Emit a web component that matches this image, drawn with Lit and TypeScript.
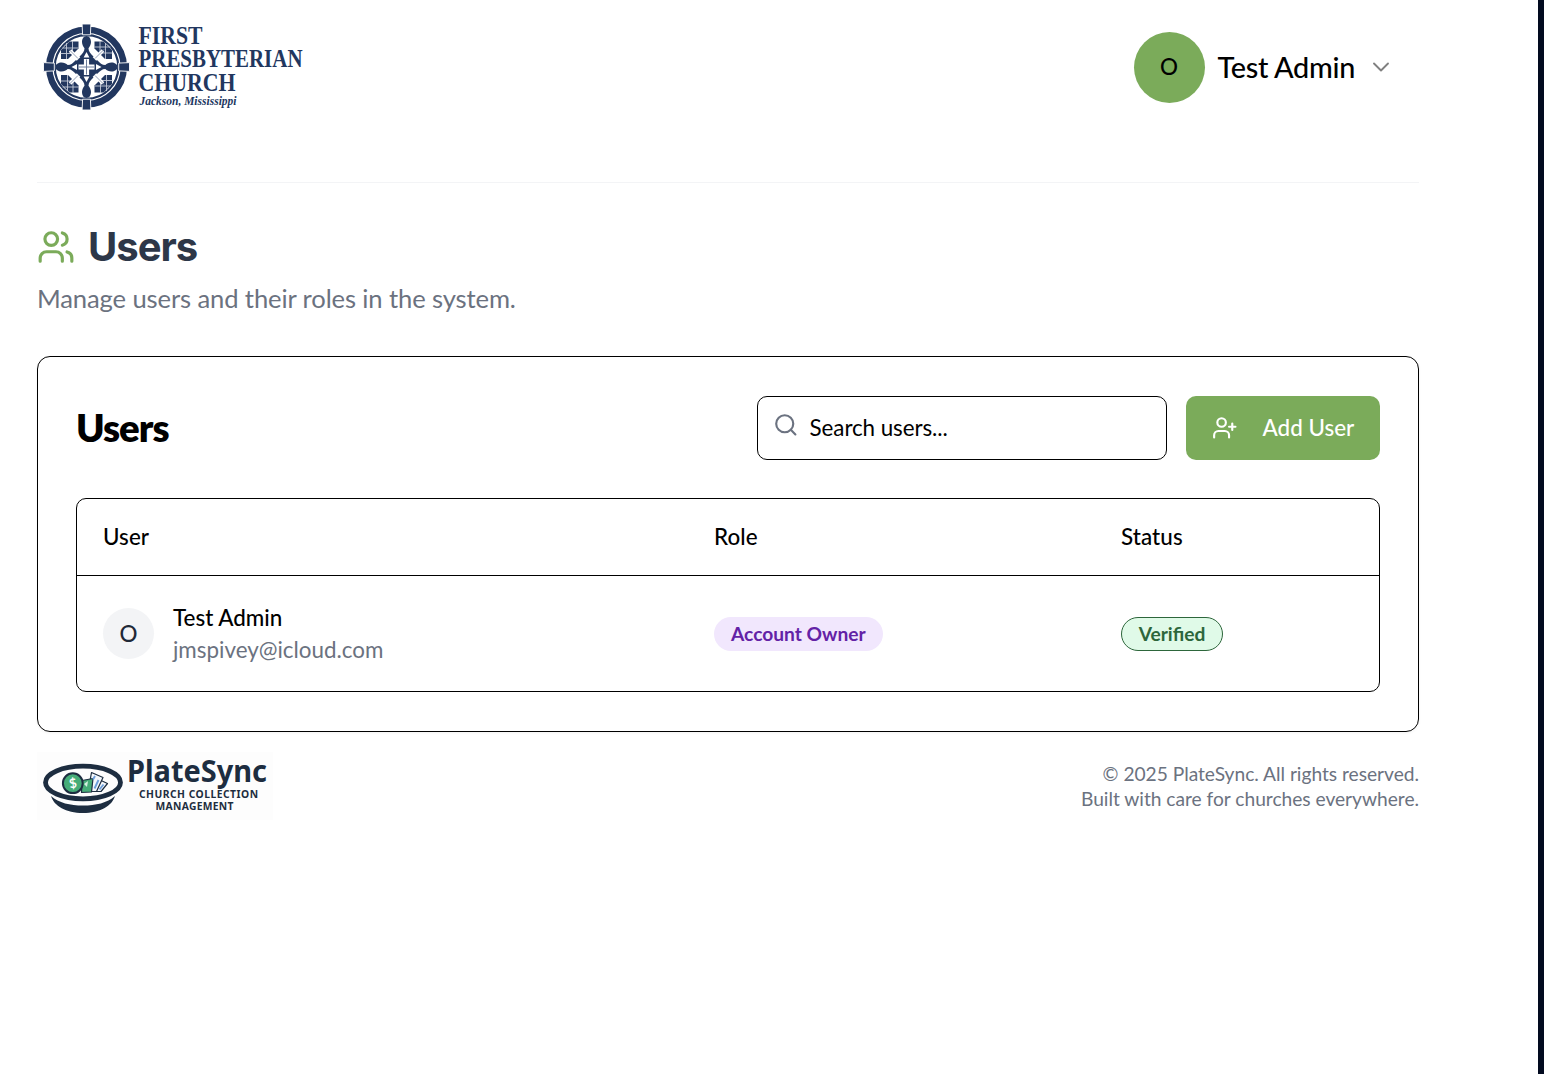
import { LitElement, html, css, svg } from "lit";
import { customElement } from "lit/decorators.js";

@customElement("church-logo")
class ChurchLogo extends LitElement {
  static styles = css`
    :host { display: block; width: 300px; height: 94px; }
    .logo { display: block; overflow: visible; }
    .name { font-family: "Liberation Serif", serif; font-weight: 700; font-size: 25px; }
    .place { font-family: "Liberation Serif", serif; font-weight: 700; font-style: italic; font-size: 13px; }
  `;
  render() {
    const arm = svg`
      <path d="M-4.400-43h8.800l-.5 10.800h-7.800z" fill="#22375f" stroke="#fff" stroke-width=".9"/>
      <path d="M0-31c2.900 0 4.500 3 4.500 6 0 2.500-1.300 4.800-2.500 6.200 0 3.300 2 5.300 5 8.300l-3 3-4-5-4 5-3-3c3-3 5-5 5-8.300-1.200-1.400-2.500-3.700-2.500-6.200C-4.500-28-2.900-31 0-31z" fill="#22375f"/>
      <path d="M0-15l2.900 5.500h-5.800z" fill="#fff"/>`;
    const pane = svg`
      <path d="M8-25.500h9l8.500 8.500v9h-7L8-18.500z" fill="#22375f"/>
      <path d="M13.500-26v12M19-24v16M8-20h16M12-14h14" stroke="#c4cbd8" stroke-width=".9"/>
      <path d="M8.500-8.500l8-8" stroke="#fff" stroke-width="3.600"/>
      <path d="M8.500-8.500l10-10" stroke="#7585a2" stroke-width=".8"/>`;
    return html`<svg class="logo" width="300" height="94" viewBox="0 0 300 94" fill="none">
      <g transform="translate(49.500 47)">
        <circle r="37.300" stroke="#22375f" stroke-width="6.400"/>
        <circle r="31.800" stroke="#22375f" stroke-width="2.200"/>
        ${[0, 90, 180, 270].map((a) => svg`<g transform="rotate(${a})">${pane}</g>`)}
        <path d="M0-16L16 0 0 16-16 0z" fill="#22375f"/>
        ${[0, 90, 180, 270].map((a) => svg`<g transform="rotate(${a})">${arm}</g>`)}
        <path d="M-2.600-8h5.200v5.400h5.400v5.200h-5.400v5.400h-5.200v-5.400h-5.400v-5.200h5.400z" fill="#fff"/>
        <path d="M0-7.500v15M-7.500 0h15" stroke="#6f7f9d" stroke-width="1"/>
      </g>
      <g fill="#22375f">
        <text class="name" x="101.500" y="23.500" textLength="64" lengthAdjust="spacingAndGlyphs">FIRST</text>
        <text class="name" x="101.500" y="47" textLength="164" lengthAdjust="spacingAndGlyphs">PRESBYTERIAN</text>
        <text class="name" x="101.500" y="70.500" textLength="97" lengthAdjust="spacingAndGlyphs">CHURCH</text>
        <text class="place" x="102.500" y="85" textLength="97" lengthAdjust="spacingAndGlyphs">Jackson, Mississippi</text>
      </g>
    </svg>`;
  }
}

@customElement("platesync-logo")
class PlateSyncLogo extends LitElement {
  static styles = css`
    :host { display: block; width: 236px; height: 68px; background: #fdfdfd; }
    .logo { display: block; }
    .brand { font-family: "Noto Sans", sans-serif; font-weight: 700; font-size: 30px; }
    .tag { font-family: "Noto Sans", sans-serif; font-weight: 700; font-size: 10.300px; }
    .dollar { font-family: Lato, sans-serif; font-weight: 700; font-size: 13px; }
  `;
  render() {
    return html`<svg class="logo" width="236" height="68" viewBox="0 0 236 68" fill="none">
      <path d="M14 44c8 7 19 9.500 32 9.500S70 51 78 44c-3 10-15 17-32 17s-29-7-32-17z" fill="#1d2d40"/>
      <ellipse cx="46" cy="30.500" rx="37.500" ry="16.300" fill="#fdfdfd" stroke="#1d2d40" stroke-width="4.800"/>
      <g stroke="#1d2d40" stroke-width="1.200" stroke-linejoin="round">
        <path d="M63 28l7.500 3.500-6.500 8h-5z" fill="#f4f8fc"/>
        <path d="M54.500 20.500l11.500 5-6.500 14h-8.500z" fill="#f4f8fc"/>
        <path d="M45 28.500l11-2-1.500 13.500-10 .5z" fill="#46ad78"/>
        <circle cx="35.800" cy="31.200" r="9.900" fill="#46ad78" stroke-width="2"/>
      </g>
      <path d="M58 24l-2 3.500M61.500 28l-4 8.500M66.500 32.500l-4 5" stroke="#6d9fdb" stroke-width="1.900"/>
      <path d="M47 32l4-3-1 6z" fill="#d5f0e1"/>
      <text class="dollar" x="32.200" y="35.800" fill="#fff" transform="rotate(-10 36 31)">$</text>
      <g fill="#1d2d40">
        <text class="brand" x="90" y="29.600" textLength="140" lengthAdjust="spacingAndGlyphs">PlateSync</text>
        <text class="tag" x="102" y="46" textLength="119">CHURCH COLLECTION</text>
        <text class="tag" x="118.500" y="58" textLength="78">MANAGEMENT</text>
      </g>
    </svg>`;
  }
}

@customElement("app-root")
class AppRoot extends LitElement {
  static styles = css`
    :host { display: block; font-family: Lato, "Liberation Sans", sans-serif; color: #000; }
    * { box-sizing: border-box; }
    .page { height: 1074px; background: #fff; border-right: 6px solid #020a1f; padding: 0 119px 0 37px; overflow: hidden; }
    .top { height: 183px; border-bottom: 1px solid #f3f4f6; padding-top: 20px; display: flex; justify-content: space-between; align-items: flex-start; }
    .account { display: flex; align-items: center; margin: 12px 26px 0 0; }
    .avatar { width: 71px; height: 71px; border-radius: 50%; background: #7bab5a; display: flex; align-items: center; justify-content: center; font-size: 22.400px; font-weight: 500; padding-bottom: 3px; }
    .account-name { font-size: 28.800px; font-weight: 500; letter-spacing: -.3px; margin: 0 14px 2px 13px; line-height: 40px; }
    .chevron { margin-bottom: 2px; }
    svg { display: block; flex: none; }
    .heading { display: flex; align-items: center; margin-top: 39px; height: 50px; gap: 13px; }
    .heading-text { margin: 0; font-family: Inter, sans-serif; font-weight: 700; font-size: 40px; line-height: 50px; letter-spacing: -1px; color: #2d3748; }
    .lead { margin: 5px 0 0; font-size: 25.600px; line-height: 42px; letter-spacing: -.12px; color: #6b7280; }
    .card { margin-top: 37px; height: 376px; border: 1px solid #000; border-radius: 13px; padding: 39px 38px 0; box-shadow: 0 1px 3px rgba(0,0,0,.05); }
    .toolbar { display: flex; align-items: center; height: 64px; }
    .card-title { margin: 0 auto 0 0; font-size: 38.400px; font-weight: 800; letter-spacing: -1px; padding-bottom: 2px; }
    .search { width: 410px; height: 64px; border: 1px solid #000; border-radius: 10px; display: flex; align-items: center; padding-left: 15px; gap: 11px; font-size: 22.400px; margin-right: 19px; }
    .search-text { padding-bottom: 2px; letter-spacing: -.08px; }
    .search-icon { margin-top: -7px; }
    .add { width: 194px; height: 64px; border: 0; border-radius: 10px; background: #7bab5a; color: #fff; font: 500 22.400px Lato, sans-serif; display: flex; align-items: center; padding: 0 0 1px 26px; gap: 25px; }
    .add-text { padding-bottom: 1px; }
    .table { margin-top: 38px; height: 194px; border: 1px solid #000; border-radius: 10px; }
    .row { display: grid; grid-template-columns: 611px 407px 1fr; align-items: center; padding-left: 26px; height: 115px; font-size: 22.400px; }
    .head { height: 77px; border-bottom: 1px solid #000; font-weight: 500; padding-bottom: 2px; letter-spacing: .1px; }
    .person { display: flex; align-items: center; gap: 19px; }
    .initial { width: 51px; height: 51px; border-radius: 50%; background: #f3f4f6; color: #1f2937; display: flex; align-items: center; justify-content: center; font-weight: 500; }
    .person-name { font-weight: 500; line-height: 32px; }
    .mail { color: #6b7280; line-height: 32px; }
    .badge { display: inline-flex; align-items: center; height: 34px; border-radius: 17px; font-size: 19.200px; font-weight: 700; padding: 0 17px; }
    .owner { background: #f1e7fd; color: #6322a6; }
    .verified { background: #e0fae8; color: #2d663b; border: 1px solid #2d663b; padding: 0; width: 102px; justify-content: center; }
    .foot { display: flex; justify-content: space-between; margin-top: 20px; }
    .legal { font-size: 19.200px; line-height: 25.400px; letter-spacing: -.02px; color: #6b7280; text-align: right; padding-top: 9px; }
  `;
  render() {
    return html`<div class="page">
      <header class="top">
        <church-logo></church-logo>
        <div class="account">
          <div class="avatar">O</div>
          <div class="account-name">Test Admin</div>
          <svg class="chevron" width="24" height="24" viewBox="0 0 24 24" fill="none" stroke="#808080" stroke-width="1.900" stroke-linecap="round" stroke-linejoin="round"><path d="m5 8.500 7 7 7-7"/></svg>
        </div>
      </header>
      <div class="heading">
        <svg width="38" height="38" viewBox="0 0 24 24" fill="none" stroke="#7bab5a" stroke-width="2" stroke-linecap="round" stroke-linejoin="round"><path d="M16 21v-2a4 4 0 0 0-4-4H6a4 4 0 0 0-4 4v2"/><circle cx="9" cy="7" r="4"/><path d="M22 21v-2a4 4 0 0 0-3-3.870"/><path d="M16 3.130a4 4 0 0 1 0 7.750"/></svg>
        <h1 class="heading-text">Users</h1>
      </div>
      <p class="lead">Manage users and their roles in the system.</p>
      <section class="card">
        <div class="toolbar">
          <h2 class="card-title">Users</h2>
          <div class="search">
            <svg class="search-icon" width="25.600" height="25.600" viewBox="0 0 24 24" fill="none" stroke="#6b7280" stroke-width="2" stroke-linecap="round" stroke-linejoin="round"><circle cx="11" cy="11" r="8"/><path d="m21 21-4.300-4.300"/></svg>
            <span class="search-text">Search users...</span>
          </div>
          <button class="add">
            <svg width="25.600" height="25.600" viewBox="0 0 24 24" fill="none" stroke="#fff" stroke-width="2" stroke-linecap="round" stroke-linejoin="round"><path d="M16 21v-2a4 4 0 0 0-4-4H6a4 4 0 0 0-4 4v2"/><circle cx="9" cy="7" r="4"/><path d="M19 8v6M22 11h-6"/></svg>
            <span class="add-text">Add User</span>
          </button>
        </div>
        <div class="table">
          <div class="row head"><div>User</div><div>Role</div><div>Status</div></div>
          <div class="row">
            <div class="person">
              <div class="initial">O</div>
              <div><div class="person-name">Test Admin</div><div class="mail">jmspivey@icloud.com</div></div>
            </div>
            <div><span class="badge owner">Account Owner</span></div>
            <div><span class="badge verified">Verified</span></div>
          </div>
        </div>
      </section>
      <footer class="foot">
        <platesync-logo></platesync-logo>
        <div class="legal">© 2025 PlateSync. All rights reserved.<br>Built with care for churches everywhere.</div>
      </footer>
    </div>`;
  }
}
